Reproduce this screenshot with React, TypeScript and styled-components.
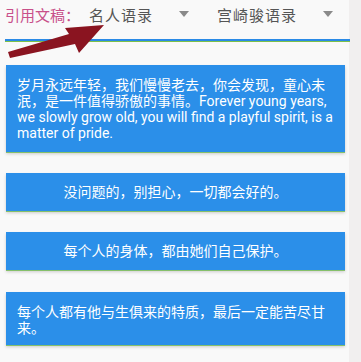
import * as React from 'react';
import styled, { createGlobalStyle } from 'styled-components';

const GlobalStyle = createGlobalStyle`
    html, body {
        margin: 0;
        padding: 0;
        background: #f6f6f6;
        font-family: Roboto, "Noto Sans CJK SC", sans-serif;
    }
`;

interface Quote {
    text: string;
    center?: boolean;
}

const quotes: Quote[] = [
    { text: '岁月永远年轻，我们慢慢老去，你会发现，童心未泯，是一件值得骄傲的事情。Forever young years, we slowly grow old, you will find a playful spirit, is a matter of pride.' },
    { text: '没问题的，别担心，一切都会好的。', center: true },
    { text: '每个人的身体，都由她们自己保护。', center: true },
    { text: '每个人都有他与生俱来的特质，最后一定能苦尽甘来。' },
];

function Caret() {
    return (
        <svg width="10" height="6" viewBox="0 0 10 6">
            <polygon points="0,0 10,0 5,6" fill="#8a8a8a" />
        </svg>
    );
}

export default function App() {
    return (
        <Page>
            <GlobalStyle />
            <Header>
                <Label>引用文稿：</Label>
                <Select>
                    <span>名人语录</span>
                    <Caret />
                </Select>
                <Select>
                    <span>宫崎骏语录</span>
                    <Caret />
                </Select>
            </Header>
            <Divider />
            <CardList>
                {quotes.map((q, i) => (
                    <Card key={i} center={q.center}>{q.text}</Card>
                ))}
            </CardList>
            <Pointer width="110" height="62" viewBox="0 0 110 62">
                <polygon
                    points="8,52 69,34 65,28 104,25 79,53 75,44 10,58"
                    fill="#8a1420"
                />
            </Pointer>
        </Page>
    );
}

const Page = styled('div')`
    position: relative;
    width: 361px;
    height: 362px;
    overflow: hidden;
    background: linear-gradient(to right, #f9f9f9 0, #f9f9f9 349px, #f1efef 349px);
`;

const Header = styled('div')`
    display: flex;
    align-items: center;
    height: 28px;
    padding: 0 0 0 5px;
    font-size: 15px;
    font-family: "Noto Sans CJK SC", sans-serif;
`;

const Label = styled('div')`
    color: #c8508a;
    width: 84px;
`;

const Select = styled('div')`
    display: flex;
    align-items: center;
    justify-content: space-between;
    color: #555;
    width: 100px;
    margin-right: 28px;
    letter-spacing: 1px;

    &:last-child {
        width: 116px;
        margin-right: 0;
    }
`;

const Divider = styled('div')`
    margin: 11px 11px 0 5px;
    height: 2px;
    background: #2a8ae6;
    border-bottom: 1px solid #7cc04a;
`;

const CardList = styled('div')`
    display: flex;
    flex-direction: column;
    gap: 21px;
    padding: 23px 0 0 6px;
    width: 339px;
`;

const Card = styled('div')<{ center?: boolean }>`
    background: #2b8fe9;
    color: #fff;
    font-size: 14px;
    line-height: 16px;
    padding: ${p => p.center ? '11px 11px 11px' : '12px 11px 11px'};
    text-align: ${p => p.center ? 'center' : 'left'};
    box-shadow: 0 1px 0 #86c06a, 0 2px 3px rgba(0, 0, 0, 0.18);

    &:last-child {
        padding-bottom: 9px;
        margin-top: 1px;
    }
`;

const Pointer = styled('svg')`
    position: absolute;
    left: 0;
    top: 0;
`;
